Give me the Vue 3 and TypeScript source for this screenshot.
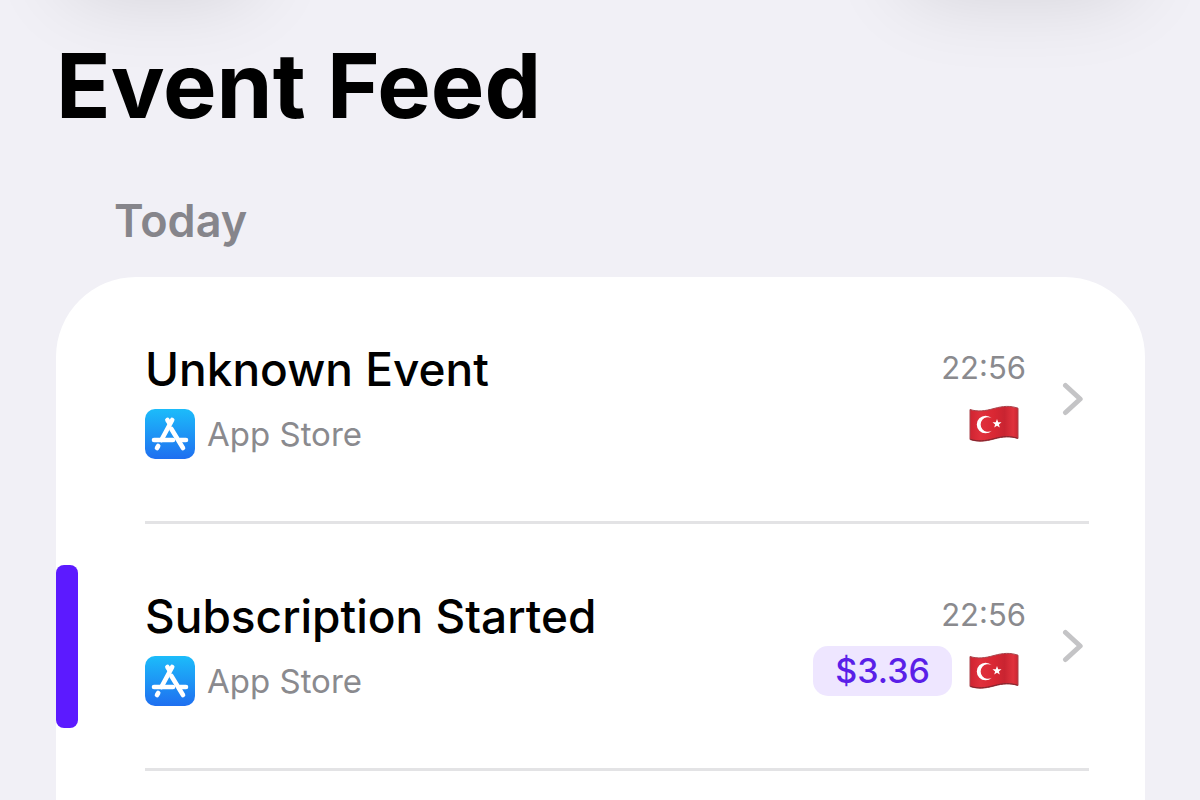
<script setup lang="ts">
interface FeedEvent {
  id: number
  title: string
  store: string
  time: string
  amount?: string
  highlighted: boolean
}

const events: FeedEvent[] = [
  { id: 1, title: 'Unknown Event', store: 'App Store', time: '22:56', highlighted: false },
  { id: 2, title: 'Subscription Started', store: 'App Store', time: '22:56', amount: '$3.36', highlighted: true },
]
</script>

<template>
  <main class="page">
    <div class="glow glow-left" aria-hidden="true"></div>
    <div class="glow glow-right" aria-hidden="true"></div>

    <h1 class="page-title">Event Feed</h1>

    <section class="group" aria-labelledby="group-title">
      <h2 id="group-title" class="group-title">Today</h2>
      <ul class="card">
        <li v-for="event in events" :key="event.id" class="item">
          <span v-if="event.highlighted" class="marker" aria-hidden="true"></span>
          <a class="row" href="#">
            <span class="info">
              <span class="title">{{ event.title }}</span>
              <span class="source">
                <svg class="store-icon" viewBox="0 0 50 50" aria-hidden="true">
                  <defs>
                    <linearGradient :id="'store-' + event.id" x1="0" y1="0" x2="0" y2="1">
                      <stop offset="0" stop-color="#1cbcfa" />
                      <stop offset="1" stop-color="#1f6ff0" />
                    </linearGradient>
                  </defs>
                  <rect width="50" height="50" rx="10" :fill="`url(#store-${event.id})`" />
                  <g fill="none" stroke="#fff" stroke-width="4.6" stroke-linecap="round">
                    <path d="M27.2 11 16.4 31" />
                    <path d="M22.4 11 24.6 14.6" />
                    <path d="M26.4 20 38 39" />
                    <path d="M9 31H28M35 31H41" />
                    <path d="M13.2 37 12 39" />
                  </g>
                </svg>
                <span class="store">{{ event.store }}</span>
              </span>
            </span>
            <span class="meta">
              <time class="time">{{ event.time }}</time>
              <span class="tags">
                <span v-if="event.amount" class="amount">{{ event.amount }}</span>
                <svg class="flag" viewBox="0 0 50 38" role="img" aria-label="Turkey">
                  <defs>
                    <linearGradient :id="'flag-' + event.id" x1="0" y1="0" x2="1" y2="0">
                      <stop offset="0" stop-color="#cf2431" />
                      <stop offset="0.22" stop-color="#e0303c" />
                      <stop offset="0.5" stop-color="#d92733" />
                      <stop offset="0.72" stop-color="#c92431" />
                      <stop offset="0.9" stop-color="#e0323d" />
                      <stop offset="1" stop-color="#cb2632" />
                    </linearGradient>
                  </defs>
                  <path
                    d="M1 4.5C9 7 16 6 25 3.5S41 .5 49 3.2V33.5C41 31 34 31.5 25 34S9 37 1 34.5Z"
                    :fill="`url(#flag-${event.id})`"
                    stroke="#a9424a"
                    stroke-width="1"
                    stroke-linejoin="round"
                  />
                  <path d="M1.5 34.3C9 36.8 16 36 25 33.6S41 30.8 48.5 33.2" fill="none" stroke="#84232c" stroke-width="1" />
                  <path d="M22.8 13.3A8.8 8.8 0 1 0 22.8 25.7A7.3 7.3 0 1 1 22.8 13.3Z" fill="#fff" />
                  <path d="m28 14 1.2 3.2 3.3.1-2.6 2.1.9 3.2-2.800-1.900-2.800 1.900.9-3.200-2.600-2.100 3.300-.1Z" fill="#fff" />
                </svg>
              </span>
            </span>
            <svg class="chevron" viewBox="0 0 22 34" aria-hidden="true">
              <path d="M3.5 3.5 18.2 17 3.5 30.5" fill="none" stroke="#c4c4c6" stroke-width="5" stroke-linecap="round" stroke-linejoin="round" />
            </svg>
          </a>
        </li>
      </ul>
    </section>
  </main>
</template>

<style>
body {
  margin: 0;
  background: #f1f0f6;
}
</style>

<style scoped>
.page {
  position: relative;
  box-sizing: border-box;
  display: flex;
  flex-direction: column;
  min-height: 100vh;
  padding: 30px 55px 0 56px;
  overflow: hidden;
  background: #f1f0f6;
  color: #000;
  font-family: Inter, "Liberation Sans", sans-serif;
}

.glow {
  position: absolute;
  top: -100px;
  height: 90px;
  border-radius: 45px;
  box-shadow: 0 8px 80px rgba(0, 0, 0, 0.12);
}

.glow-left {
  left: 60px;
  width: 200px;
}

.glow-right {
  right: 60px;
  width: 240px;
}

.page-title {
  position: relative;
  margin: 0;
  font-size: 90px;
  font-weight: 700;
  line-height: 112px;
}

.group {
  display: flex;
  flex: 1;
  flex-direction: column;
}

.group-title {
  margin: 49px 58px 26px;
  color: #86858b;
  font-size: 45px;
  font-weight: 600;
  line-height: 60px;
}

.card {
  flex: 1;
  margin: 0;
  padding: 0;
  border-radius: 80px 80px 0 0;
  background: #fff;
  list-style: none;
}

.item {
  position: relative;
}

.item::after {
  display: block;
  height: 3px;
  margin: 0 56px 0 89px;
  background: #e3e3e5;
  content: "";
}

.marker {
  position: absolute;
  top: 41px;
  bottom: 43px;
  left: 0;
  width: 22px;
  border-radius: 8px;
  background: #5c1aff;
}

.row {
  display: flex;
  align-items: center;
  padding: 62px 61px 62px 89px;
  color: inherit;
  text-decoration: none;
}

.info {
  display: flex;
  flex: 1;
  flex-direction: column;
  gap: 10px;
}

.title {
  font-size: 46px;
  font-weight: 500;
  line-height: 60px;
}

.source {
  display: flex;
  align-items: center;
  gap: 12px;
}

.store-icon {
  width: 50px;
  height: 50px;
}

.store {
  color: #8a8a8e;
  font-size: 33px;
  line-height: 40px;
}

.meta {
  display: flex;
  flex-direction: column;
  align-items: flex-end;
  gap: 11px;
  padding-bottom: 1px;
}

.time {
  color: #8a8a8e;
  font-size: 31px;
  line-height: 40px;
}

.tags {
  display: flex;
  align-items: center;
  gap: 17px;
  height: 50px;
  padding-right: 7px;
}

.amount {
  padding: 0 22px;
  border-radius: 15px;
  background: #eee6ff;
  color: #5a1fe8;
  font-size: 34px;
  font-weight: 500;
  line-height: 50px;
}

.flag {
  width: 50px;
  height: 38px;
}

.chevron {
  width: 22px;
  height: 34px;
  margin-left: 36px;
}
</style>
